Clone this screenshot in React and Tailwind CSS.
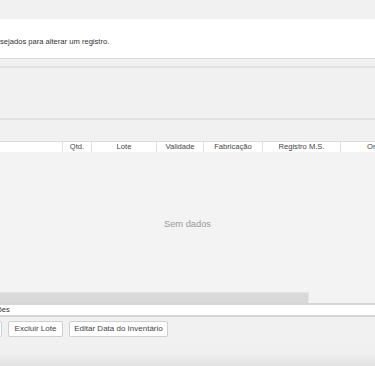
import React from 'react';

const columns = [
  { label: '', width: 'w-[63px]' },
  { label: 'Qtd.', width: 'w-[29px]' },
  { label: 'Lote', width: 'w-[65px]' },
  { label: 'Validade', width: 'w-[47px]' },
  { label: 'Fabricação', width: 'w-[59px]' },
  { label: 'Registro M.S.', width: 'w-[78px]' },
  { label: 'Origem', width: 'w-[78px]' },
];

const App = () => {
  return (
    <div className="w-[375px] h-[366px] overflow-hidden bg-[#f1f1f1] flex flex-col font-['Liberation_Sans',Arial,sans-serif] text-[#333]">
      {/* top strip */}
      <div className="h-[19px] shrink-0" />

      {/* info panel */}
      <div className="h-[40px] shrink-0 bg-white border-b border-[#dadada] pt-[18px] text-[7.6px] leading-[10px] whitespace-nowrap">
        sejados para alterar um registro.
      </div>

      <div className="h-[7px] shrink-0" />

      {/* filter panel (empty) */}
      <div className="h-[54px] shrink-0 border-t-2 border-b-2 border-[#e2e2e2]" />

      <div className="h-[21px] shrink-0" />

      {/* grid */}
      <div className="flex flex-col h-[151px] shrink-0 border-t border-[#dcdcdc]">
        <div className="flex h-[10px] shrink-0 bg-white whitespace-nowrap overflow-hidden">
          {columns.map((col, i) => (
            <div
              key={i}
              className={`${col.width} shrink-0 border-r border-[#e0e0e0] text-center text-[7.6px] leading-[10px] text-[#444]`}
            >
              {col.label}
            </div>
          ))}
        </div>
        <div className="flex-1 bg-[#f3f3f3] flex items-center justify-center pt-[5px]">
          <span className="text-[9.3px] text-[#9a9a9a]">Sem dados</span>
        </div>
      </div>

      {/* horizontal scrollbar */}
      <div className="flex h-[11px] shrink-0 bg-[#f3f3f3]">
        <div className="w-[309px] bg-[#d9d9d9] border-t border-r border-[#e4e4e4]" />
      </div>

      {/* edit field */}
      <div className="h-[14px] shrink-0 bg-white border-t-2 border-b-2 border-[#d6d6d6] overflow-hidden">
        <div className="-ml-[35px] text-[7.6px] leading-[10px] whitespace-nowrap">Observações</div>
      </div>

      {/* buttons */}
      <div className="flex gap-[6px] pt-[4px] shrink-0 -ml-[40px]">
        <button className="h-[16px] w-[42px] bg-white border border-[#cfcfcf] rounded-[2px] text-[8px] text-[#444]">
          Salvar
        </button>
        <button className="h-[16px] w-[55px] bg-white border border-[#cfcfcf] rounded-[2px] text-[8px] text-[#444]">
          Excluir Lote
        </button>
        <button className="h-[16px] w-[99px] bg-white border border-[#cfcfcf] rounded-[2px] text-[8px] text-[#444]">
          Editar Data do Inventário
        </button>
      </div>

      {/* bottom gradient */}
      <div className="flex-1 mt-[2px] bg-gradient-to-b from-[#f1f1f1] via-[#f0f0f0] to-[#e2e2e2]" />
    </div>
  );
};

export default App;
